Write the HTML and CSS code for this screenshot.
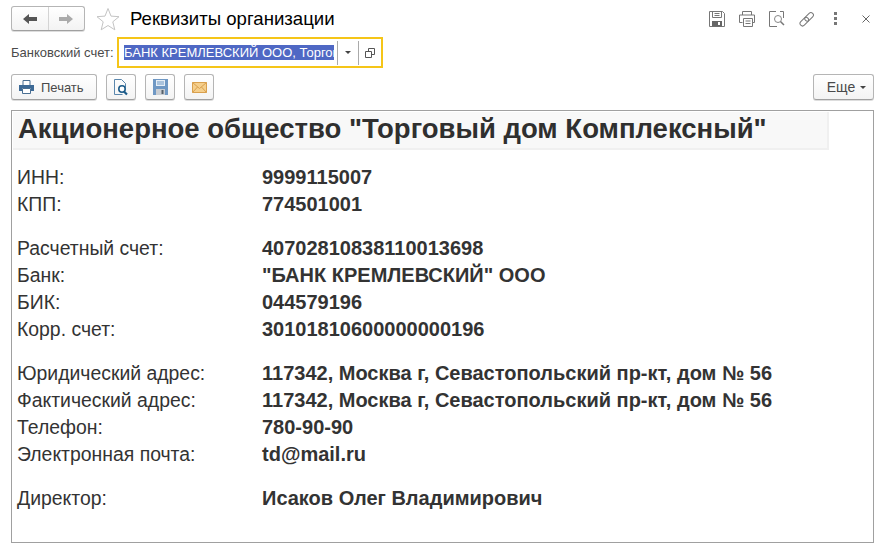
FILE: index.html
```html
<!DOCTYPE html>
<html lang="ru">
<head>
<meta charset="utf-8">
<title>Реквизиты организации</title>
<link rel="stylesheet" href="styles.css">
</head>
<body>
<header class="titlebar">
  <div class="nav">
    <button class="nav-btn"><svg width="14" height="12" viewBox="0 0 14 12"><path d="M0 6 6 1v3h8v4H6v3z" fill="#555"/></svg></button>
    <button class="nav-btn"><svg width="14" height="12" viewBox="0 0 14 12"><path d="M14 6 8 1v3H0v4h8v3z" fill="#aaa"/></svg></button>
  </div>
  <svg class="star" width="24" height="24" viewBox="0 0 24 24"><path d="M12 1.500l3 7.600 8 .6-6.200 5.100 2 8L12 18.500 5.200 22.800l2-8L1 9.700l8-.6z" fill="#fff" stroke="#c4c4c4"/></svg>
  <h1 class="title">Реквизиты организации</h1>
  <div class="tools">
    <svg class="tool" width="16" height="16" viewBox="0 0 16 16"><path d="M.5.5h13l2 2v13H.5z" fill="none" stroke="#777"/><path d="M3.500.5v6h9v-6M5.500 2.500h5M5.500 4.500h5" fill="none" stroke="#777"/><path d="M3 10h10v5.500H3z" fill="#666"/><path d="M9 11h2v3H9z" fill="#fff"/></svg>
    <svg class="tool" width="16" height="16" viewBox="0 0 16 16"><path d="M3.500 4V.5h9V4M3.500 11.500H.5V4h15v7.500h-3" fill="none" stroke="#777"/><path d="M4.500 7.500h9v8h-9zM6.500 10h5M6.500 12.500h5" fill="#fff" stroke="#777"/></svg>
    <svg class="tool" width="16" height="16" viewBox="0 0 16 16"><path d="M7 .5H.5v15H8M11 .5h3.500V7" fill="none" stroke="#777"/><circle cx="9" cy="8" r="3.500" fill="none" stroke="#888"/><path d="M11.500 10.500l3.500 3.500" stroke="#777" stroke-width="1.500"/></svg>
    <svg class="tool" width="16" height="16" viewBox="0 0 16 16"><g fill="none" stroke="#777"><rect x="-2" y="-2.500" width="10" height="5" rx="2.500" transform="translate(3.200 12.800) rotate(-45)"/><rect x="-2" y="-2.500" width="10" height="5" rx="2.500" transform="translate(8 8) rotate(-45)"/></g></svg>
    <svg class="tool-more" width="3" height="13" viewBox="0 0 3 13"><path d="M0 0h3v3H0zM0 5h3v3H0zM0 10h3v3H0z" fill="#777"/></svg>
    <svg class="tool-close" width="8" height="8" viewBox="0 0 8 8"><path d="M.5.5l7 7M7.500.5l-7 7" stroke="#666"/></svg>
  </div>
</header>

<div class="account-row">
  <label class="account-label">Банковский счет:</label>
  <div class="account-field">
    <span class="account-value"><span class="selected">БАНК КРЕМЛЕВСКИЙ ООО, Торговый дом</span></span>
    <span class="field-btn"><i class="caret"></i></span>
    <span class="field-btn"><svg width="10" height="10" viewBox="0 0 10 10"><path d="M3.500.5h6v6h-6z" fill="none" stroke="#555"/><path d="M.5 3.500h6v6h-6z" fill="#fff" stroke="#555"/></svg></span>
  </div>
</div>

<div class="toolbar">
  <button class="btn btn-print">
    <svg width="15" height="14" viewBox="0 0 15 14"><path d="M4 5V.5h7V5" fill="#fff" stroke="#4a6f92"/><path d="M0 5h15v6h-3V8H3v3H0z" fill="#3d6a96"/><path d="M3.500 8.500h8v5h-8z" fill="#fff" stroke="#4a6f92"/></svg>
    <span>Печать</span>
  </button>
  <button class="btn btn-icon"><svg width="15" height="17" viewBox="0 0 15 17"><path d="M.5.5h7l4 4v4M.5.5v15h8" fill="none" stroke="#5b87ad"/><circle cx="8" cy="10" r="3.200" fill="#fff" stroke="#1d5c8a" stroke-width="1.600"/><path d="M10 12.500l3 3" stroke="#1d5c8a" stroke-width="2.200"/></svg></button>
  <button class="btn btn-icon"><svg width="15" height="16" viewBox="0 0 15 16"><path d="M0 0h15v16H0z" fill="#6f98c4"/><path d="M3 1h9v6H3z" fill="#e6eef6"/><path d="M4 3h7M4 5h7" stroke="#6f98c4"/><path d="M3 10h9v6H3z" fill="#c9cdd2"/><path d="M8.500 11h2v4h-2z" fill="#56606a"/></svg></button>
  <button class="btn btn-icon"><svg width="15" height="11" viewBox="0 0 15 11"><path d="M.5.5h14v10H.5z" fill="#f5cf8c" stroke="#d9a04e"/><path d="M.5.5l7 6 7-6M.5 10.500l5-5.500M14.500 10.500l-5-5.500" fill="none" stroke="#d9a04e"/></svg></button>
  <button class="btn btn-more">Еще <i class="caret"></i></button>
</div>

<main class="doc">
  <h2 class="doc-heading">Акционерное общество "Торговый дом Комплексный"</h2>
  <dl class="group">
    <dt>ИНН:</dt><dd>9999115007</dd>
    <dt>КПП:</dt><dd>774501001</dd>
  </dl>
  <dl class="group">
    <dt>Расчетный счет:</dt><dd>40702810838110013698</dd>
    <dt>Банк:</dt><dd>"БАНК КРЕМЛЕВСКИЙ" ООО</dd>
    <dt>БИК:</dt><dd>044579196</dd>
    <dt>Корр. счет:</dt><dd>30101810600000000196</dd>
  </dl>
  <dl class="group">
    <dt>Юридический адрес:</dt><dd>117342, Москва г, Севастопольский пр-кт, дом № 56</dd>
    <dt>Фактический адрес:</dt><dd>117342, Москва г, Севастопольский пр-кт, дом № 56</dd>
    <dt>Телефон:</dt><dd>780-90-90</dd>
    <dt>Электронная почта:</dt><dd>td@mail.ru</dd>
  </dl>
  <dl class="group">
    <dt>Директор:</dt><dd>Исаков Олег Владимирович</dd>
  </dl>
</main>
</body>
</html>
```

FILE: styles.css
```css
* { box-sizing: border-box; }

html, body {
  margin: 0;
  height: 100%;
  background: #fff;
}

body {
  width: 893px;
  height: 555px;
  overflow: hidden;
  padding: 6px 19px 0 11px;
  font-family: "Liberation Sans", Arial, sans-serif;
  color: #333;
}

button {
  font: inherit;
  color: inherit;
  margin: 0;
}

/* Title bar */
.titlebar {
  display: flex;
  align-items: center;
  height: 25px;
}

.nav {
  display: flex;
  width: 74px;
  height: 25px;
  border: 1px solid #b5b5b5;
  border-bottom-color: #a0a0a0;
  border-radius: 3px;
  background: linear-gradient(#fff, #f3f3f3);
  box-shadow: 0 1px 0 #ddd;
}

.nav-btn {
  flex: 1;
  display: flex;
  align-items: center;
  justify-content: center;
  padding: 0;
  border: 0;
  background: none;
}

.nav-btn + .nav-btn {
  border-left: 1px solid #d4d4d4;
}

.star {
  margin-left: 11px;
}

.title {
  margin: 1px 0 0 10px;
  font-size: 18.6px;
  font-weight: 400;
  color: #000;
}

.tools {
  display: flex;
  align-items: center;
  margin-left: auto;
  margin-right: 4px;
}

.tool {
  margin-right: 14px;
}

.tool-more {
  margin: 0 25px 0 5px;
}

/* Account field */
.account-row {
  display: flex;
  align-items: center;
  height: 31px;
  margin-top: 6px;
}

.account-label {
  width: 106px;
  font-size: 13px;
  color: #4a4a4a;
  white-space: nowrap;
}

.account-field {
  display: flex;
  align-items: center;
  width: 266px;
  height: 31px;
  padding: 0 1px 0 5px;
  border: 2px solid #f5c518;
  font-size: 13px;
}

.account-value {
  flex: none;
  width: 210px;
  margin-right: 3px;
  overflow: hidden;
  white-space: nowrap;
  line-height: 15px;
}

.selected {
  background: #4f68c4;
  color: #fff;
}

.field-btn {
  flex: none;
  display: flex;
  align-items: center;
  justify-content: center;
  height: 24px;
  width: 21px;
  border-left: 1px solid #aaa;
}

.field-btn + .field-btn {
  width: 22px;
}

.caret {
  display: inline-block;
  width: 0;
  height: 0;
  border: 3px solid transparent;
  border-top: 3px solid #444;
  border-bottom: 0;
}

/* Toolbar */
.toolbar {
  display: flex;
  align-items: center;
  gap: 9px;
  height: 26px;
  margin-top: 6px;
}

.btn {
  display: flex;
  align-items: center;
  justify-content: center;
  height: 26px;
  padding: 0;
  border: 1px solid #b5b5b5;
  border-bottom-color: #a0a0a0;
  border-radius: 3px;
  background: linear-gradient(#fff, #f3f3f3);
  box-shadow: 0 1px 0 #ddd;
  font-size: 13px;
  color: #4a4a4a;
}

.btn-print {
  width: 86px;
  gap: 7px;
  justify-content: flex-start;
  padding-left: 7px;
}

.btn-icon {
  width: 30px;
}

.btn-more {
  width: 61px;
  gap: 5px;
  margin-left: auto;
  padding-left: 6px;
  font-size: 14px;
}

/* Document */
.doc {
  width: 863px;
  height: 433px;
  margin-top: 10px;
  padding: 1px;
  border: 1px solid #a0a0a0;
}

.doc-heading {
  width: 816px;
  height: 38px;
  margin: 0 0 14px;
  padding-left: 5px;
  background: #f8f8f8;
  border-right: 2px solid #f0f0f0;
  border-bottom: 2px solid #f0f0f0;
  font-family: "Liberation Sans", Arial, sans-serif;
  font-size: 27.5px;
  line-height: 34px;
  font-weight: 700;
  color: #2f2f2f;
}

.group {
  display: grid;
  grid-template-columns: 245px 1fr;
  grid-auto-rows: 27px;
  margin: 0 0 17px 4px;
  line-height: 27px;
}

.group dt {
  font-size: 19.4px;
  font-weight: 400;
}

.group dd {
  margin: 0;
  font-size: 20px;
  font-weight: 700;
}
```
